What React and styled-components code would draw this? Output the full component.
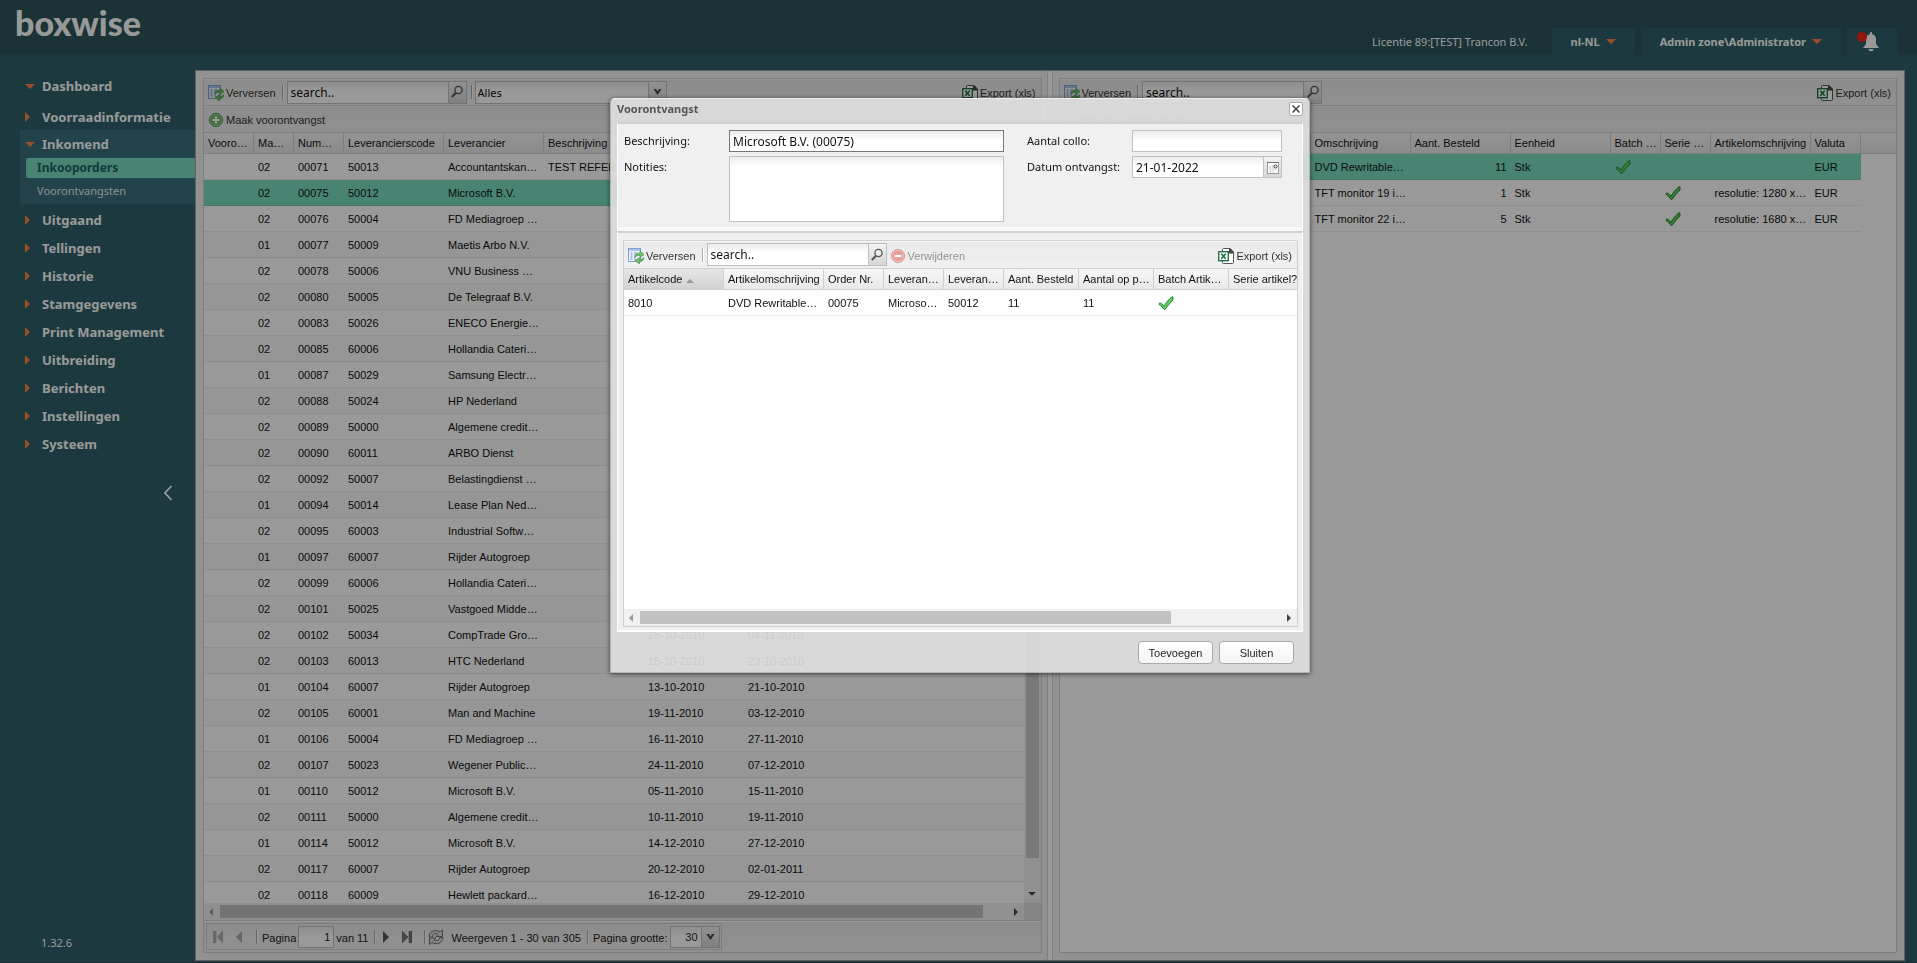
import React, { useState } from 'react';
import styled, { createGlobalStyle, css } from 'styled-components';

const arial = "'Liberation Sans', Arial, sans-serif";
const tahoma = "'Noto Sans', Tahoma, sans-serif";
const orange = '#ff8547';

const GlobalStyle = createGlobalStyle`
  * {
    box-sizing: border-box;
  }

  body {
    margin: 0;
    background: #305f69;
    font-family: ${arial};
    font-size: 11px;
    color: #111;
    overflow: hidden;
  }

  button,
  input,
  select,
  textarea {
    font: inherit;
    color: inherit;
    margin: 0;
    border-radius: 0;
  }
`;

const Page = styled.div`
  display: flex;
  flex-direction: column;
  height: 100vh;
  border-bottom: 1px solid #28505c;
`;

const Header = styled.header`
  display: flex;
  justify-content: space-between;
  align-items: flex-end;
  height: 55px;
  padding-right: 20px;
  background: #2d545d;
  font-family: ${tahoma};
  font-size: 11px;
  color: #fff;
`;

const Logo = styled.a`
  align-self: flex-start;
  padding: 2px 0 0 15px;
  font-family: Lato, sans-serif;
  font-size: 34px;
  line-height: 42px;
  font-weight: 900;
  color: #fff;
  text-decoration: none;
`;

const HeaderTools = styled.div`
  display: flex;
  align-items: center;
  gap: 6px;
  height: 27px;
`;

const Licence = styled.span`
  margin-right: 18px;
`;

const HeaderTab = styled.button`
  display: flex;
  align-items: center;
  justify-content: center;
  gap: 6px;
  height: 27px;
  padding: 0 19px;
  border: 0;
  background: #305f69;
  font-weight: 700;
  cursor: pointer;
`;

const BellTab = styled(HeaderTab)`
  width: 50px;
  padding: 0 8px 2px 0;
`;

const Main = styled.main`
  flex: 1;
  display: flex;
  min-height: 0;
`;

const Sidebar = styled.nav`
  display: flex;
  flex-direction: column;
  width: 195px;
  padding-top: 13px;
  color: #fff;
  font-family: ${tahoma};
`;

const MenuItem = styled.button`
  display: flex;
  align-items: center;
  gap: ${(p) => (p.$open ? '7px' : '12px')};
  width: 100%;
  height: ${(p) => p.$height || 28}px;
  padding: 0 0 0 25px;
  border: 0;
  background: none;
  font-size: 13px;
  font-weight: 700;
  text-align: left;
  white-space: nowrap;
  cursor: pointer;
`;

const MenuGroup = styled.div`
  margin: 0 0 2px 20px;
  background: #38707b;
  border-radius: 2px 0 0 2px;

  ${MenuItem} {
    padding-left: 5px;
  }
`;

const SubItem = styled.a`
  display: block;
  height: 20px;
  margin-left: 6px;
  padding-left: 11px;
  line-height: 20px;
  font-size: ${(p) => (p.$active ? 12 : 11)}px;
  font-weight: ${(p) => (p.$active ? 700 : 400)};
  color: ${(p) => (p.$active ? '#1f5f66' : '#e8eeee')};
  background: ${(p) => (p.$active ? '#7addc0' : 'none')};
  border-radius: 2px 0 0 2px;
  text-decoration: none;
`;

const SubMenu = styled.div`
  display: flex;
  flex-direction: column;
  gap: 3px;
  padding-bottom: 3px;
`;

const Collapse = styled.button`
  display: flex;
  align-self: flex-end;
  margin: 25px 20px 0 0;
  padding: 2px;
  border: 0;
  background: none;
  cursor: pointer;
`;

const Version = styled.span`
  margin-top: auto;
  padding: 0 0 12px 41px;
  font-size: 11px;
`;

const Workspace = styled.div`
  flex: 1;
  display: flex;
  min-width: 0;
  margin: 15px 12px 1px 0;
  background: #f2f2f2;
  border: 1px solid #a5a0a3;
`;

const Splitter = styled.div`
  width: 6px;
  background: #fdfdfd;
  border: solid #d8d8d8;
  border-width: 0 1px;
`;

const Side = styled.section`
  flex: 1;
  display: flex;
  min-width: 0;
  padding: ${(p) => (p.$right ? '7px 7px 7px 6px' : '7px 5px 7px 7px')};
`;

const Panel = styled.div`
  flex: 1;
  display: flex;
  flex-direction: column;
  min-width: 0;
  background: #fff;
  border: 1px solid #d0d0d0;
`;

const Toolbar = styled.div`
  display: flex;
  align-items: center;
  height: ${(p) => p.$height || 27}px;
  padding: 0 4px;
  border-bottom: 1px solid #d0d0d0;
  box-shadow: inset 0 1px #f7f7f7;
  background: linear-gradient(#e9e9e9, #f1f1f1);
`;

const ToolButton = styled.button`
  display: flex;
  align-items: center;
  gap: 2px;
  height: 22px;
  margin-left: ${(p) => (p.$end ? 'auto' : 0)};
  padding: ${(p) => (p.$end ? '2px 1px 0 0' : '2px 0 0')};
  border: 0;
  background: none;
  color: #333;
  white-space: nowrap;
  cursor: pointer;

  &:disabled {
    padding-left: 3px;
    opacity: 0.5;
  }
`;

const Separator = styled.span`
  width: 2px;
  height: 14px;
  margin: ${(p) => (p.$tight ? '0 2px 0 4px' : '0 3px 0 6px')};
  background: linear-gradient(90deg, #aaa 50%, #fff 50%);
`;

const fieldBox = css`
  border: 1px solid #c0c0c0;
  background: linear-gradient(#ececec, #fff 9px);
  font-family: ${tahoma};
  font-size: 12px;
  outline: 0;
`;

const Combo = styled.div`
  display: flex;
  width: ${(p) => p.$width}px;
  height: ${(p) => p.$height || 23}px;
`;

const Field = styled.input`
  ${fieldBox}
  flex: 1;
  min-width: 0;
  height: 100%;
  padding: 0 3px;
`;

const PageField = styled(Field)`
  font-family: ${arial};
  font-size: 11px;
  text-align: right;
`;

const Select = styled.select`
  ${fieldBox}
  flex: 1;
  min-width: 0;
  height: 100%;
  padding: 0 2px;
  font-size: 11px;
  appearance: none;
`;

const Trigger = styled.button`
  display: flex;
  align-items: center;
  justify-content: center;
  width: 18px;
  padding: 0;
  border: 1px solid #c0c0c0;
  border-left: 0;
  background: linear-gradient(#f3f3f3, #d6d6d6);
  cursor: pointer;
`;

const GridArea = styled.div`
  flex: 1;
  display: flex;
  min-height: 0;
`;

const GridView = styled.div`
  flex: 1;
  min-width: 0;
  overflow: hidden;
`;

const Table = styled.table`
  width: ${(p) => (p.$width ? `${p.$width}px` : '100%')};
  table-layout: fixed;
  border-collapse: separate;
  border-spacing: 0;
`;

const Th = styled.th`
  height: 21px;
  padding: 0 0 0 4px;
  font-weight: 400;
  text-align: left;
  white-space: nowrap;
  overflow: hidden;
  background: ${(p) => (p.$sorted ? 'linear-gradient(#e6e6e6, #d2d2d2)' : 'linear-gradient(#f7f7f7, #e8e8e8)')};
  border: solid #d0d0d0;
  border-width: 0 ${(p) => (p.$filler ? 0 : '1px')} 1px 0;

  svg {
    margin-left: 4px;
  }
`;

const Td = styled.td`
  height: 26px;
  padding: 0 4px;
  white-space: nowrap;
  overflow: hidden;
  text-align: ${(p) => p.$align || 'left'};
  border-bottom: 1px solid #ededed;

  svg {
    display: block;
  }
`;

const Row = styled.tr`
  background: ${(p) => (p.$alt ? '#fafafa' : '#fff')};

  ${(p) =>
    p.$selected &&
    css`
      ${Td} {
        background: #7addc0;
        border-bottom-color: #7ac5b0;
      }
    `}
`;

const Blank = styled.td`
  background: #fff;
`;

const VScroll = styled.div`
  display: flex;
  flex-direction: column;
  align-items: center;
  width: 17px;
  padding: 17px 2px 7px;
  background: #f1f1f1;
`;

const VThumb = styled.div`
  width: 13px;
  height: 100%;
  margin-bottom: 34px;
  background: #c9c9c9;
`;

const HBar = styled.div`
  display: flex;
  height: 17px;
  background: #f1f1f1;
`;

const HScroll = styled.div`
  flex: 1;
  display: flex;
  align-items: center;
  justify-content: space-between;
  gap: 7px;
  padding: 0 6px 0 5px;
`;

const HTrack = styled.div`
  flex: 1;
  display: flex;
`;

const HThumb = styled.div`
  width: ${(p) => p.$size};
  height: 13px;
  background: #c1c1c1;
`;

const Corner = styled.div`
  width: 17px;
  background: #dcdcdc;
`;

const PagingBar = styled.div`
  display: flex;
  height: 32px;
  padding: 2px;
  border-top: 1px solid #d0d0d0;
  box-shadow: inset 0 1px #fff;
  background: linear-gradient(#eaeaea, #f1f1f1);
`;

const Paging = styled.div`
  display: flex;
  align-items: center;
  height: 27px;
  padding: 0 1px 0 3px;
  border: 1px solid #d0d0d0;
  white-space: nowrap;
  color: #222;
`;

const PageSeparator = styled(Separator)`
  margin: 0 2px 0 4px;
`;

const PageButton = styled.button`
  display: flex;
  align-items: center;
  justify-content: center;
  width: 16px;
  height: 16px;
  margin-right: 5px;
  padding: 0;
  border: 0;
  background: none;

  &:disabled {
    opacity: 0.5;
  }
`;

const PageText = styled.label`
  padding: 2px 2px 0;
`;

const Overlay = styled.div`
  position: fixed;
  inset: 0;
  display: flex;
  align-items: flex-start;
  justify-content: center;
  padding: 98px 0 0 3px;
  background: rgba(0, 0, 0, 0.4);
`;

const Modal = styled.div`
  width: 700px;
  padding: 0 6px 7px;
  background: rgba(224, 224, 224, 0.9);
  border: 1px solid #b4b4b4;
  border-top-color: #eee;
  border-radius: 5px 5px 0 0;
  box-shadow: 0 1px 5px rgba(0, 0, 0, 0.6);
`;

const ModalHeader = styled.div`
  display: flex;
  align-items: flex-start;
  justify-content: space-between;
  height: 23px;
  padding-top: 3px;
  font-family: ${tahoma};
`;

const ModalTitle = styled.h2`
  margin: 0;
  font-size: 11px;
  line-height: 14px;
  color: #555;
`;

const Close = styled.button`
  display: flex;
  align-items: center;
  justify-content: center;
  width: 14px;
  height: 14px;
  padding: 0;
  border: 1px solid #aaa;
  border-radius: 2px;
  background: #fff;
`;

const ModalSection = styled.div`
  background: #f0f0f0;
  border: 1px solid #fff;
  border-top: 2px solid #d0d0d0;
`;

const Form = styled(ModalSection)`
  display: grid;
  grid-template-columns: 105px 275px 128px 150px;
  grid-template-rows: 22px 66px;
  row-gap: 4px;
  height: 109px;
  padding: 6px 0 0 6px;
  border-bottom: 4px solid #f9f9f9;
  font-family: ${tahoma};
  font-size: 12px;
`;

const Label = styled.label`
  padding: 3px 0 0;
  font-size: 11px;
  white-space: nowrap;
`;

const RightLabel = styled(Label)`
  padding-left: 23px;
`;

const FormText = styled(Field)`
  height: 22px;
  border-color: ${(p) => (p.$focus ? '#777' : '#c0c0c0')};
`;

const FieldCell = styled.div`
  display: flex;
  height: 22px;
`;

const TextArea = styled.textarea`
  ${fieldBox}
  width: 100%;
  height: 66px;
  resize: none;
`;

const Details = styled(ModalSection)`
  height: 401px;
  padding: 7px 4px 3px 5px;
  border-bottom-width: 2px;
`;

const DetailPanel = styled(Panel)`
  height: 100%;
`;

const Footer = styled.div`
  display: flex;
  justify-content: flex-end;
  gap: 6px;
  padding: 9px 9px 1px;
`;

const Button = styled.button`
  width: 75px;
  height: 23px;
  padding: 0;
  border: 1px solid #aaa;
  border-radius: 4px;
  background: linear-gradient(#fff, #f4f4f4);
  color: #222;
`;

const Caret = ({ dir = 'down', color = '#444', size = 8 }) => {
  const points = {
    down: '0,0 10,0 5,5',
    up: '0,5 10,5 5,0',
    right: '0,0 5,5 0,10',
    left: '5,0 0,5 5,10',
  };
  const flat = dir === 'down' || dir === 'up';
  return (
    <svg
      width={flat ? size : size / 2}
      height={flat ? size / 2 : size}
      viewBox={flat ? '0 0 10 5' : '0 0 5 10'}
      aria-hidden="true"
    >
      <polygon points={points[dir]} fill={color} />
    </svg>
  );
};

const ComboArrow = () => (
  <svg width="9" height="8" viewBox="0 0 9 8" aria-hidden="true">
    <path d="M0.500 1h2.500l1.500 2.500L6 1h2.500L4.500 7z" fill="#444" />
  </svg>
);

const RefreshIcon = () => (
  <svg width="16" height="16" viewBox="0 0 16 16" aria-hidden="true">
    <rect x="0.5" y="0.5" width="12" height="13" fill="#eef4fc" stroke="#7d9fd6" />
    <path d="M1 1h11v2H1z" fill="#a8c3ea" />
    <path d="M2.500 5h2M2.500 7h2M2.500 9h2M2.500 11h2M6 5h3M6 7h2M6 9h2M6 11h2" stroke="#6d8fc4" />
    <path d="M7 9c0-3 2-4 5-4V3l4 3.500-4 3V7.500c-2 0-3 0-5 1.500z" fill="#6fbf66" stroke="#3c8a3f" strokeWidth="0.6" />
    <path d="M16 9.500c0 3-2 4-4.500 4V16L7 12.500 11.500 9.500v2c2 0 3-.5 4.500-2z" fill="#6fbf66" stroke="#3c8a3f" strokeWidth="0.6" />
  </svg>
);

const ExcelIcon = () => (
  <svg width="16" height="16" viewBox="0 0 16 16" aria-hidden="true">
    <path d="M4.500 3V1.500q0-1 1-1H12L15.500 4v10.500q0 1-1 1h-9q-1 0-1-1V13" fill="#fff" stroke="#555" />
    <path d="M11 0.500h1.500L15.500 4v1.500H11z" fill="#444" />
    <rect x="0.700" y="3.700" width="9.600" height="9" fill="#fff" stroke="#217346" strokeWidth="1.400" />
    <path d="M3.300 5.800l4.400 5M7.700 5.800l-4.400 5" stroke="#217346" strokeWidth="1.700" />
  </svg>
);

const AddIcon = () => (
  <svg width="16" height="16" viewBox="0 0 16 16" aria-hidden="true">
    <circle cx="8" cy="8" r="6.500" fill="#6cb85c" stroke="#4b8a45" />
    <circle cx="8" cy="8" r="5.500" fill="none" stroke="#a6d69a" />
    <path d="M8 4.500v7M4.500 8h7" stroke="#fff" strokeWidth="2.200" />
  </svg>
);

const RemoveIcon = () => (
  <svg width="16" height="16" viewBox="0 0 16 16" aria-hidden="true">
    <circle cx="8" cy="8" r="6.500" fill="#e04a3a" stroke="#c03a30" />
    <circle cx="8" cy="8" r="5.500" fill="none" stroke="#ef9a90" />
    <path d="M4.500 8h7" stroke="#fff" strokeWidth="2.400" />
  </svg>
);

const SearchIcon = () => (
  <svg width="14" height="14" viewBox="0 0 14 14" aria-hidden="true">
    <circle cx="8.500" cy="5" r="3.600" fill="#eee" stroke="#555" strokeWidth="1.300" />
    <path d="M6 7.800L1.800 12" stroke="#555" strokeWidth="2" />
  </svg>
);

const CheckIcon = () => (
  <svg width="16" height="16" viewBox="0 0 16 16" aria-label="ja">
    <path
      d="M1 8.500c1-.8 2-.6 2.600.2L6 11.200C8 7.500 11 3.800 14.500 1.500l.5.400V5C12.500 7.500 9.500 11 7 14.500H6C4.800 12.500 3.200 11 1.500 10z"
      fill="#58cf58"
      stroke="#237a2b"
      strokeWidth="0.9"
    />
  </svg>
);

const DateIcon = () => (
  <svg width="12" height="13" viewBox="0 0 12 13" aria-hidden="true">
    <rect x="0.500" y="1.500" width="11" height="11" fill="#fff" stroke="#999" />
    <path d="M0 1.500h12" stroke="#777" />
    <path d="M2 6h5M2 8h8M2 10h8M3.500 4v8M6 4v8" stroke="#ddd" />
    <circle cx="8.500" cy="5.500" r="1.500" fill="#fff" stroke="#333" />
  </svg>
);

const ReloadIcon = () => (
  <svg width="16" height="16" viewBox="0 0 16 16" aria-hidden="true">
    <path
      d="M1 8C1 3 7-.5 12 3l2.500-2v6.500H8l2-2C7 3.500 4.500 5 4.500 8z"
      fill="#ddd"
      stroke="#666"
      strokeWidth="0.900"
    />
    <path
      d="M15 8.500c0 5-6 8-11 5L1.500 15.500V9H8l-2 2c3 1.500 5.500 0 5.500-2.500z"
      fill="#ddd"
      stroke="#666"
      strokeWidth="0.900"
    />
  </svg>
);

const EdgeIcon = ({ dir }) => (
  <svg width="10" height="12" viewBox="0 0 10 12" aria-hidden="true">
    <path
      d={dir === 'first' ? 'M0 0h3v12H0zM10 0v12L4 6z' : 'M7 0h3v12H7zM0 0v12l6-6z'}
      fill="#777"
      stroke="#555"
      strokeWidth="0.500"
    />
  </svg>
);

const BellIcon = () => (
  <svg width="24" height="24" viewBox="0 0 24 24" aria-hidden="true">
    <path d="M15 3c.6 0 1 .4 1 1v1c2.400.5 4 2.500 4 5v5l3 4H7l3-4v-5c0-2.500 1.600-4.500 4-5V4c0-.6.400-1 1-1z" fill="#fff" />
    <path d="M12.500 20h5c0 3-5 3-5 0z" fill="#fff" />
    <circle cx="6" cy="8" r="5" fill="#f5261b" />
  </svg>
);

const orderColumns = [
  { name: 'Vooro…', width: 50 },
  { name: 'Ma…', width: 40 },
  { name: 'Num…', width: 50 },
  { name: 'Leverancierscode', width: 100 },
  { name: 'Leverancier', width: 100 },
  { name: 'Beschrijving', width: 100 },
  { name: '', width: 100 },
  { name: '', width: 100 },
];

const orders = [
  ['', '02', '00071', '50013', 'Accountantskan…', 'TEST REFER…'],
  ['', '02', '00075', '50012', 'Microsoft B.V.'],
  ['', '02', '00076', '50004', 'FD Mediagroep …'],
  ['', '01', '00077', '50009', 'Maetis Arbo N.V.'],
  ['', '02', '00078', '50006', 'VNU Business …'],
  ['', '02', '00080', '50005', 'De Telegraaf B.V.'],
  ['', '02', '00083', '50026', 'ENECO Energie…'],
  ['', '02', '00085', '60006', 'Hollandia Cateri…'],
  ['', '01', '00087', '50029', 'Samsung Electr…'],
  ['', '02', '00088', '50024', 'HP Nederland'],
  ['', '02', '00089', '50000', 'Algemene credit…'],
  ['', '02', '00090', '60011', 'ARBO Dienst'],
  ['', '02', '00092', '50007', 'Belastingdienst …'],
  ['', '01', '00094', '50014', 'Lease Plan Ned…'],
  ['', '02', '00095', '60003', 'Industrial Softw…'],
  ['', '01', '00097', '60007', 'Rijder Autogroep'],
  ['', '02', '00099', '60006', 'Hollandia Cateri…'],
  ['', '02', '00101', '50025', 'Vastgoed Midde…'],
  ['', '02', '00102', '50034', 'CompTrade Gro…', '', '25-10-2010', '04-11-2010'],
  ['', '02', '00103', '60013', 'HTC Nederland', '', '15-10-2010', '23-10-2010'],
  ['', '01', '00104', '60007', 'Rijder Autogroep', '', '13-10-2010', '21-10-2010'],
  ['', '02', '00105', '60001', 'Man and Machine', '', '19-11-2010', '03-12-2010'],
  ['', '01', '00106', '50004', 'FD Mediagroep …', '', '16-11-2010', '27-11-2010'],
  ['', '02', '00107', '50023', 'Wegener Public…', '', '24-11-2010', '07-12-2010'],
  ['', '01', '00110', '50012', 'Microsoft B.V.', '', '05-11-2010', '15-11-2010'],
  ['', '02', '00111', '50000', 'Algemene credit…', '', '10-11-2010', '19-11-2010'],
  ['', '01', '00114', '50012', 'Microsoft B.V.', '', '14-12-2010', '27-12-2010'],
  ['', '02', '00117', '60007', 'Rijder Autogroep', '', '20-12-2010', '02-01-2011'],
  ['', '02', '00118', '60009', 'Hewlett packard…', '', '16-12-2010', '29-12-2010'],
];

const lineColumns = [
  { name: '', width: 51 },
  { name: '', width: 100 },
  { name: '', width: 100 },
  { name: 'Omschrijving', width: 100 },
  { name: 'Aant. Besteld', width: 100, align: 'right' },
  { name: 'Eenheid', width: 100 },
  { name: 'Batch …', width: 50 },
  { name: 'Serie …', width: 50 },
  { name: 'Artikelomschrijving', width: 100 },
  { name: 'Valuta', width: 50 },
];

const lines = [
  ['', '', '', 'DVD Rewritable…', '11', 'Stk', true, '', '', 'EUR'],
  ['', '', '', 'TFT monitor 19 i…', '1', 'Stk', '', true, 'resolutie: 1280 x…', 'EUR'],
  ['', '', '', 'TFT monitor 22 i…', '5', 'Stk', '', true, 'resolutie: 1680 x…', 'EUR'],
];

const receiptColumns = [
  { name: 'Artikelcode', width: 100, sorted: true },
  { name: 'Artikelomschrijving', width: 100 },
  { name: 'Order Nr.', width: 60 },
  { name: 'Leveran…', width: 60 },
  { name: 'Leveran…', width: 60 },
  { name: 'Aant. Besteld', width: 75 },
  { name: 'Aantal op p…', width: 75 },
  { name: 'Batch Artik…', width: 75 },
  { name: 'Serie artikel?', width: 100 },
];

const receiptRows = [['8010', 'DVD Rewritable…', '00075', 'Microso…', '50012', '11', '11', true, '']];

const menu = [
  'Uitgaand',
  'Tellingen',
  'Historie',
  'Stamgegevens',
  'Print Management',
  'Uitbreiding',
  'Berichten',
  'Instellingen',
  'Systeem',
];

const Grid = ({ columns, rows, selected, fill, fixed, striped }) => (
  <Table $width={fixed}>
    <colgroup>
      {columns.map((col, i) => (
        <col key={i} style={{ width: col.width }} />
      ))}
      {!fixed && <col />}
    </colgroup>
    <thead>
      <tr>
        {columns.map((col, i) => (
          <Th key={i} $sorted={col.sorted}>
            {col.name}
            {col.sorted && <Caret dir="up" color="#999" />}
          </Th>
        ))}
        {!fixed && <Th $filler />}
      </tr>
    </thead>
    <tbody>
      {rows.map((row, r) => (
        <Row key={r} $alt={striped && r % 2 === 1} $selected={r === selected}>
          {columns.map((col, c) => (
            <Td key={c} $align={col.align}>
              {row[c] === true ? <CheckIcon /> : row[c]}
            </Td>
          ))}
          {!fixed && (fill ? <Td /> : <Blank />)}
        </Row>
      ))}
    </tbody>
  </Table>
);

const Search = ({ label }) => (
  <Combo $width={180}>
    <Field type="text" defaultValue="search.." aria-label={label} />
    <Trigger aria-label="Zoeken">
      <SearchIcon />
    </Trigger>
  </Combo>
);

const HorizontalScroll = ({ size, corner }) => (
  <HBar>
    <HScroll>
      <Caret dir="left" color="#999" />
      <HTrack>
        <HThumb $size={size} />
      </HTrack>
      <Caret dir="right" color="#444" />
    </HScroll>
    {corner && <Corner />}
  </HBar>
);

const ExportButton = () => (
  <ToolButton $end>
    <ExcelIcon />
    Export (xls)
  </ToolButton>
);

const RefreshButton = () => (
  <ToolButton>
    <RefreshIcon />
    Verversen
  </ToolButton>
);

const ReceiptModal = () => {
  const [description, setDescription] = useState('Microsoft B.V. (00075)');

  return (
    <Modal role="dialog" aria-labelledby="modal-title">
      <ModalHeader>
        <ModalTitle id="modal-title">Voorontvangst</ModalTitle>
        <Close aria-label="Sluit venster">
          <svg width="8" height="8" viewBox="0 0 8 8">
            <path d="M0.500 0.500l7 7M7.500 0.500l-7 7" stroke="#444" strokeWidth="1.500" />
          </svg>
        </Close>
      </ModalHeader>
      <Form>
        <Label htmlFor="description">Beschrijving:</Label>
        <FormText
          id="description"
          $focus
          autoFocus
          value={description}
          onFocus={(e) => e.target.setSelectionRange(description.length, description.length)}
          onChange={(e) => setDescription(e.target.value)}
        />
        <RightLabel htmlFor="collo">Aantal collo:</RightLabel>
        <FieldCell>
          <Field id="collo" />
        </FieldCell>
        <Label htmlFor="notes">Notities:</Label>
        <TextArea id="notes" />
        <RightLabel htmlFor="received">Datum ontvangst:</RightLabel>
        <FieldCell>
          <Field id="received" defaultValue="21-01-2022" />
          <Trigger aria-label="Kies datum">
            <DateIcon />
          </Trigger>
        </FieldCell>
      </Form>
      <Details>
        <DetailPanel>
          <Toolbar $height={28}>
            <RefreshButton />
            <Separator />
            <Search label="Zoek artikel" />
            <ToolButton disabled>
              <RemoveIcon />
              Verwijderen
            </ToolButton>
            <ExportButton />
          </Toolbar>
          <GridView>
            <Grid columns={receiptColumns} rows={receiptRows} fixed={705} />
          </GridView>
          <HorizontalScroll size="83%" />
        </DetailPanel>
      </Details>
      <Footer>
        <Button>Toevoegen</Button>
        <Button>Sluiten</Button>
      </Footer>
    </Modal>
  );
};

const App = () => (
  <>
    <GlobalStyle />
    <Page>
      <Header>
        <Logo href="#">boxwise</Logo>
        <HeaderTools>
          <Licence>Licentie 89:[TEST] Trancon B.V.</Licence>
          <HeaderTab>
            nl-NL
            <Caret color={orange} size={10} />
          </HeaderTab>
          <HeaderTab>
            Admin zone\Administrator
            <Caret color={orange} size={10} />
          </HeaderTab>
          <BellTab aria-label="Meldingen">
            <BellIcon />
          </BellTab>
        </HeaderTools>
      </Header>
      <Main>
        <Sidebar>
          <MenuItem $open $height={36}>
            <Caret color={orange} size={10} />
            Dashboard
          </MenuItem>
          <MenuItem $height={26}>
            <Caret dir="right" color={orange} size={10} />
            Voorraadinformatie
          </MenuItem>
          <MenuGroup>
            <MenuItem $open>
              <Caret color={orange} size={10} />
              Inkomend
            </MenuItem>
            <SubMenu>
              <SubItem href="#inkooporders" $active>
                Inkooporders
              </SubItem>
              <SubItem href="#voorontvangsten">Voorontvangsten</SubItem>
            </SubMenu>
          </MenuGroup>
          {menu.map((item) => (
            <MenuItem key={item}>
              <Caret dir="right" color={orange} size={10} />
              {item}
            </MenuItem>
          ))}
          <Collapse aria-label="Menu inklappen">
            <svg width="10" height="16" viewBox="0 0 10 16">
              <path d="M8.500 1L2 8l6.500 7" fill="none" stroke="#fff" strokeWidth="1.800" />
            </svg>
          </Collapse>
          <Version>1.32.6</Version>
        </Sidebar>
        <Workspace>
          <Side>
            <Panel>
              <Toolbar>
                <RefreshButton />
                <Separator />
                <Search label="Zoek order" />
                <Separator $tight />
                <Combo $width={192}>
                  <Select aria-label="Filter">
                    <option>Alles</option>
                  </Select>
                  <Trigger aria-label="Open filter">
                    <ComboArrow />
                  </Trigger>
                </Combo>
                <ExportButton />
              </Toolbar>
              <Toolbar>
                <ToolButton>
                  <AddIcon />
                  Maak voorontvangst
                </ToolButton>
              </Toolbar>
              <GridArea>
                <GridView>
                  <Grid columns={orderColumns} rows={orders} selected={1} fill striped />
                </GridView>
                <VScroll>
                  <VThumb />
                  <Caret />
                </VScroll>
              </GridArea>
              <HorizontalScroll size="97%" corner />
              <PagingBar>
                <Paging>
                  <PageButton disabled aria-label="Eerste pagina">
                    <EdgeIcon dir="first" />
                  </PageButton>
                  <PageButton disabled aria-label="Vorige pagina">
                    <Caret dir="left" size={12} color="#666" />
                  </PageButton>
                  <PageSeparator />
                  <PageText htmlFor="page">Pagina</PageText>
                  <Combo $width={36} $height={22}>
                    <PageField id="page" defaultValue="1" />
                  </Combo>
                  <PageText as="span">van 11</PageText>
                  <PageSeparator />
                  <PageButton aria-label="Volgende pagina">
                    <Caret dir="right" size={12} color="#555" />
                  </PageButton>
                  <PageButton aria-label="Laatste pagina">
                    <EdgeIcon dir="last" />
                  </PageButton>
                  <PageSeparator />
                  <PageButton aria-label="Verversen">
                    <ReloadIcon />
                  </PageButton>
                  <PageText as="span">Weergeven 1 - 30 van 305</PageText>
                  <PageSeparator />
                  <PageText htmlFor="page-size">Pagina grootte:</PageText>
                  <Combo $width={50} $height={22}>
                    <PageField id="page-size" defaultValue="30" />
                    <Trigger aria-label="Kies pagina grootte">
                      <ComboArrow />
                    </Trigger>
                  </Combo>
                </Paging>
              </PagingBar>
            </Panel>
          </Side>
          <Splitter />
          <Side $right>
            <Panel>
              <Toolbar>
                <RefreshButton />
                <Separator />
                <Search label="Zoek orderregel" />
                <ExportButton />
              </Toolbar>
              <Toolbar>
                <ToolButton disabled>
                  <AddIcon />
                  Maak voorontvangst
                </ToolButton>
              </Toolbar>
              <GridView>
                <Grid columns={lineColumns} rows={lines} selected={0} />
              </GridView>
            </Panel>
          </Side>
        </Workspace>
      </Main>
    </Page>
    <Overlay>
      <ReceiptModal />
    </Overlay>
  </>
);

export default App;
